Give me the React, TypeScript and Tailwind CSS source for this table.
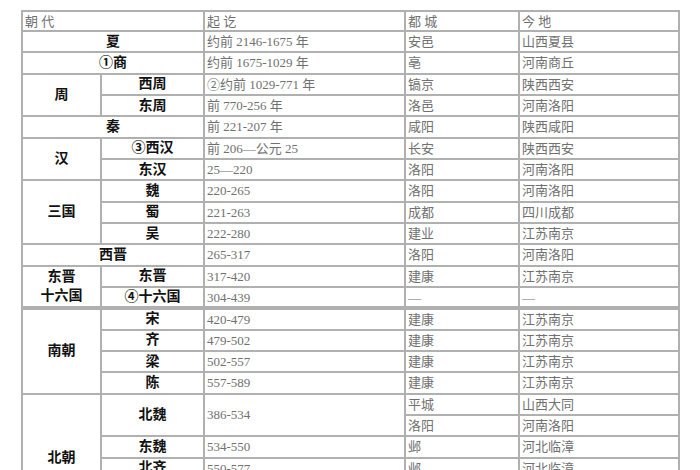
import React from 'react'

type Sub = { name: string; span: string; capital: string; place: string }

const cellBase = 'border-2 border-[#b0b0b0] p-0 align-middle'
const nameCell = `${cellBase} text-center text-[14px] font-bold text-[#111]`
const infoCell = `${cellBase} pl-[2px] text-left text-[13px] text-[#707070]`

function InfoCells({ span, capital, place }: { span: string; capital: string; place: string }) {
  return (
    <>
      <td className={infoCell}>{span}</td>
      <td className={infoCell}>{capital}</td>
      <td className={infoCell}>{place}</td>
    </>
  )
}

function Single({ name, span, capital, place }: Sub) {
  return (
    <tr className="h-[21.33px]">
      <td colSpan={2} className={nameCell}>{name}</td>
      <InfoCells span={span} capital={capital} place={place} />
    </tr>
  )
}

function Group({ label, subs, thick }: { label: React.ReactNode; subs: Sub[]; thick?: boolean }) {
  const top = thick ? ' border-t-[4px]' : ''
  return (
    <>
      {subs.map((s, i) => (
        <tr key={s.name} className="h-[21.33px]">
          {i === 0 && (
            <td rowSpan={subs.length} className={nameCell + top}>{label}</td>
          )}
          <td className={nameCell + (i === 0 ? top : '')}>{s.name}</td>
          <td className={infoCell + (i === 0 ? top : '')}>{s.span}</td>
          <td className={infoCell + (i === 0 ? top : '')}>{s.capital}</td>
          <td className={infoCell + (i === 0 ? top : '')}>{s.place}</td>
        </tr>
      ))}
    </>
  )
}

const nanchao: Sub[] = [
  { name: '宋', span: '420-479', capital: '建康', place: '江苏南京' },
  { name: '齐', span: '479-502', capital: '建康', place: '江苏南京' },
  { name: '梁', span: '502-557', capital: '建康', place: '江苏南京' },
  { name: '陈', span: '557-589', capital: '建康', place: '江苏南京' },
]

export default function App() {
  return (
    <div
      className="h-[470px] w-[700px] overflow-hidden bg-white pl-[21px] pt-[10px]"
      style={{ fontFamily: '"Liberation Serif", "Noto Sans CJK SC", serif' }}
    >
      <table className="w-[657px] table-fixed border-collapse leading-none">
        <colgroup>
          <col className="w-[79px]" />
          <col className="w-[103px]" />
          <col className="w-[201px]" />
          <col className="w-[114px]" />
          <col className="w-[160px]" />
        </colgroup>
        <tbody>
          <tr className="h-[20px]">
            <td colSpan={2} className={infoCell}>朝 代</td>
            <InfoCells span="起 讫" capital="都 城" place="今 地" />
          </tr>
          <Single name="夏" span="约前 2146-1675 年" capital="安邑" place="山西夏县" />
          <Single name="①商" span="约前 1675-1029 年" capital="亳" place="河南商丘" />
          <Group
            label="周"
            subs={[
              { name: '西周', span: '②约前 1029-771 年', capital: '镐京', place: '陕西西安' },
              { name: '东周', span: '前 770-256 年', capital: '洛邑', place: '河南洛阳' },
            ]}
          />
          <Single name="秦" span="前 221-207 年" capital="咸阳" place="陕西咸阳" />
          <Group
            label="汉"
            subs={[
              { name: '③西汉', span: '前 206—公元 25', capital: '长安', place: '陕西西安' },
              { name: '东汉', span: '25—220', capital: '洛阳', place: '河南洛阳' },
            ]}
          />
          <Group
            label="三国"
            subs={[
              { name: '魏', span: '220-265', capital: '洛阳', place: '河南洛阳' },
              { name: '蜀', span: '221-263', capital: '成都', place: '四川成都' },
              { name: '吴', span: '222-280', capital: '建业', place: '江苏南京' },
            ]}
          />
          <Single name="西晋" span="265-317" capital="洛阳" place="河南洛阳" />
          <Group
            label={<span className="leading-[19px]">东晋<br />十六国</span>}
            subs={[
              { name: '东晋', span: '317-420', capital: '建康', place: '江苏南京' },
              { name: '④十六国', span: '304-439', capital: '—', place: '—' },
            ]}
          />
          <Group label="南朝" subs={nanchao} thick />
          <tr className="h-[21.33px]">
            <td rowSpan={6} className={nameCell}>北朝</td>
            <td rowSpan={2} className={nameCell}>北魏</td>
            <td rowSpan={2} className={infoCell}>386-534</td>
            <td className={infoCell}>平城</td>
            <td className={infoCell}>山西大同</td>
          </tr>
          <tr className="h-[21.33px]">
            <td className={infoCell}>洛阳</td>
            <td className={infoCell}>河南洛阳</td>
          </tr>
          <tr className="h-[21.33px]">
            <td className={nameCell}>东魏</td>
            <InfoCells span="534-550" capital="邺" place="河北临漳" />
          </tr>
          <tr className="h-[21.33px]">
            <td className={nameCell}>北齐</td>
            <InfoCells span="550-577" capital="邺" place="河北临漳" />
          </tr>
          <tr className="h-[21.33px]">
            <td className={nameCell}>西魏</td>
            <InfoCells span="535-556" capital="长安" place="陕西西安" />
          </tr>
          <tr className="h-[21.33px]">
            <td className={nameCell}>北周</td>
            <InfoCells span="557-581" capital="长安" place="陕西西安" />
          </tr>
        </tbody>
      </table>
    </div>
  )
}
